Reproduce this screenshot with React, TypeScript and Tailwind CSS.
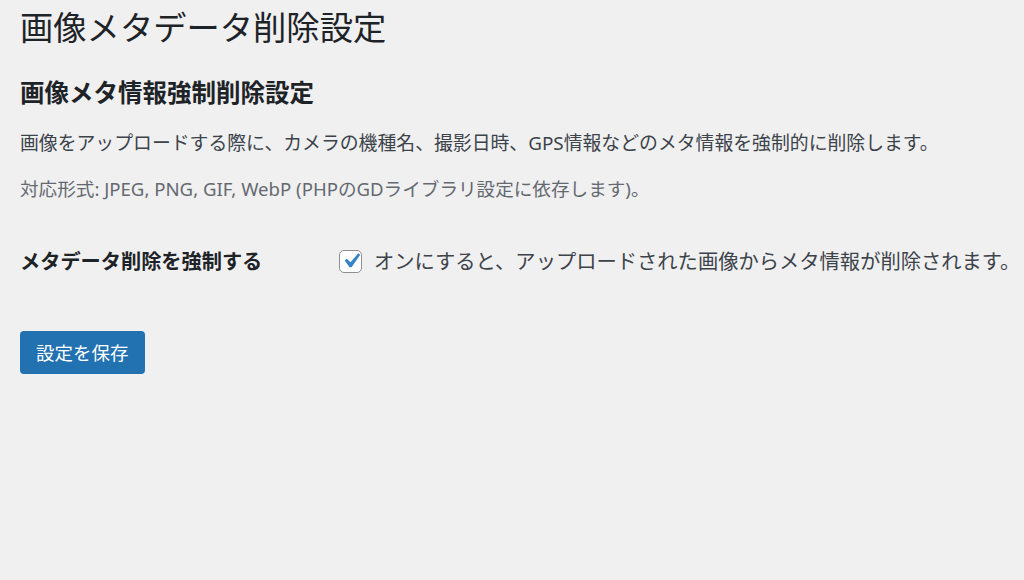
import React, { useState } from "react";

const font = '"Noto Sans", "Noto Sans CJK JP", sans-serif';

export default function App() {
  const [forceDelete, setForceDelete] = useState(true);

  return (
    <div
      className="min-h-[580px] w-full bg-[#f0f0f1] pl-[20px] pr-[2px] pt-[5px] text-[#3c434a]"
      style={{ fontFamily: font }}
    >
      {/* page title */}
      <h1 className="text-[33.3px] font-normal leading-[44px] text-[#1d2327]">
        画像メタデータ削除設定
      </h1>

      {/* section */}
      <h2 className="mt-[28px] text-[24.5px] font-semibold leading-[32px] text-[#1d2327]">
        画像メタ情報強制削除設定
      </h2>
      <p className="mt-[20px] text-[18.85px] leading-[28px]">
        画像をアップロードする際に、カメラの機種名、撮影日時、GPS情報などのメタ情報を強制的に削除します。
      </p>
      <p className="mt-[18px] text-[18.6px] leading-[28px] text-[#646970]">
        対応形式: JPEG, PNG, GIF, WebP (PHPのGDライブラリ設定に依存します)。
      </p>

      {/* settings row */}
      <div className="mt-[44px] flex items-center">
        <div className="w-[319px] text-[20.2px] font-semibold leading-[28px] text-[#1d2327]">
          メタデータ削除を強制する
        </div>
        <label className="flex cursor-pointer items-center gap-[12px] whitespace-nowrap text-[20.3px] leading-[28px]">
          <button
            type="button"
            onClick={() => setForceDelete(!forceDelete)}
            className="flex h-[23px] w-[23px] shrink-0 items-center justify-center overflow-visible rounded-[5px] border border-[#8c8f94] bg-white"
          >
            {forceDelete && (
              <svg width="30" height="30" viewBox="0 0 20 20" className="-m-[4px] shrink-0">
                <path
                  d="M14.83 4.89l1.34.94-5.81 8.38H9.02L5.78 9.67l1.34-1.25 2.57 2.4z"
                  fill="#3582c4"
                />
              </svg>
            )}
          </button>
          <span>オンにすると、アップロードされた画像からメタ情報が削除されます。</span>
        </label>
      </div>

      {/* submit */}
      <div className="mt-[56px]">
        <button
          type="button"
          className="h-[43px] rounded-[4px] bg-[#2271b1] px-[16px] text-[18.5px] leading-[43px] text-white"
        >
          設定を保存
        </button>
      </div>
    </div>
  );
}
